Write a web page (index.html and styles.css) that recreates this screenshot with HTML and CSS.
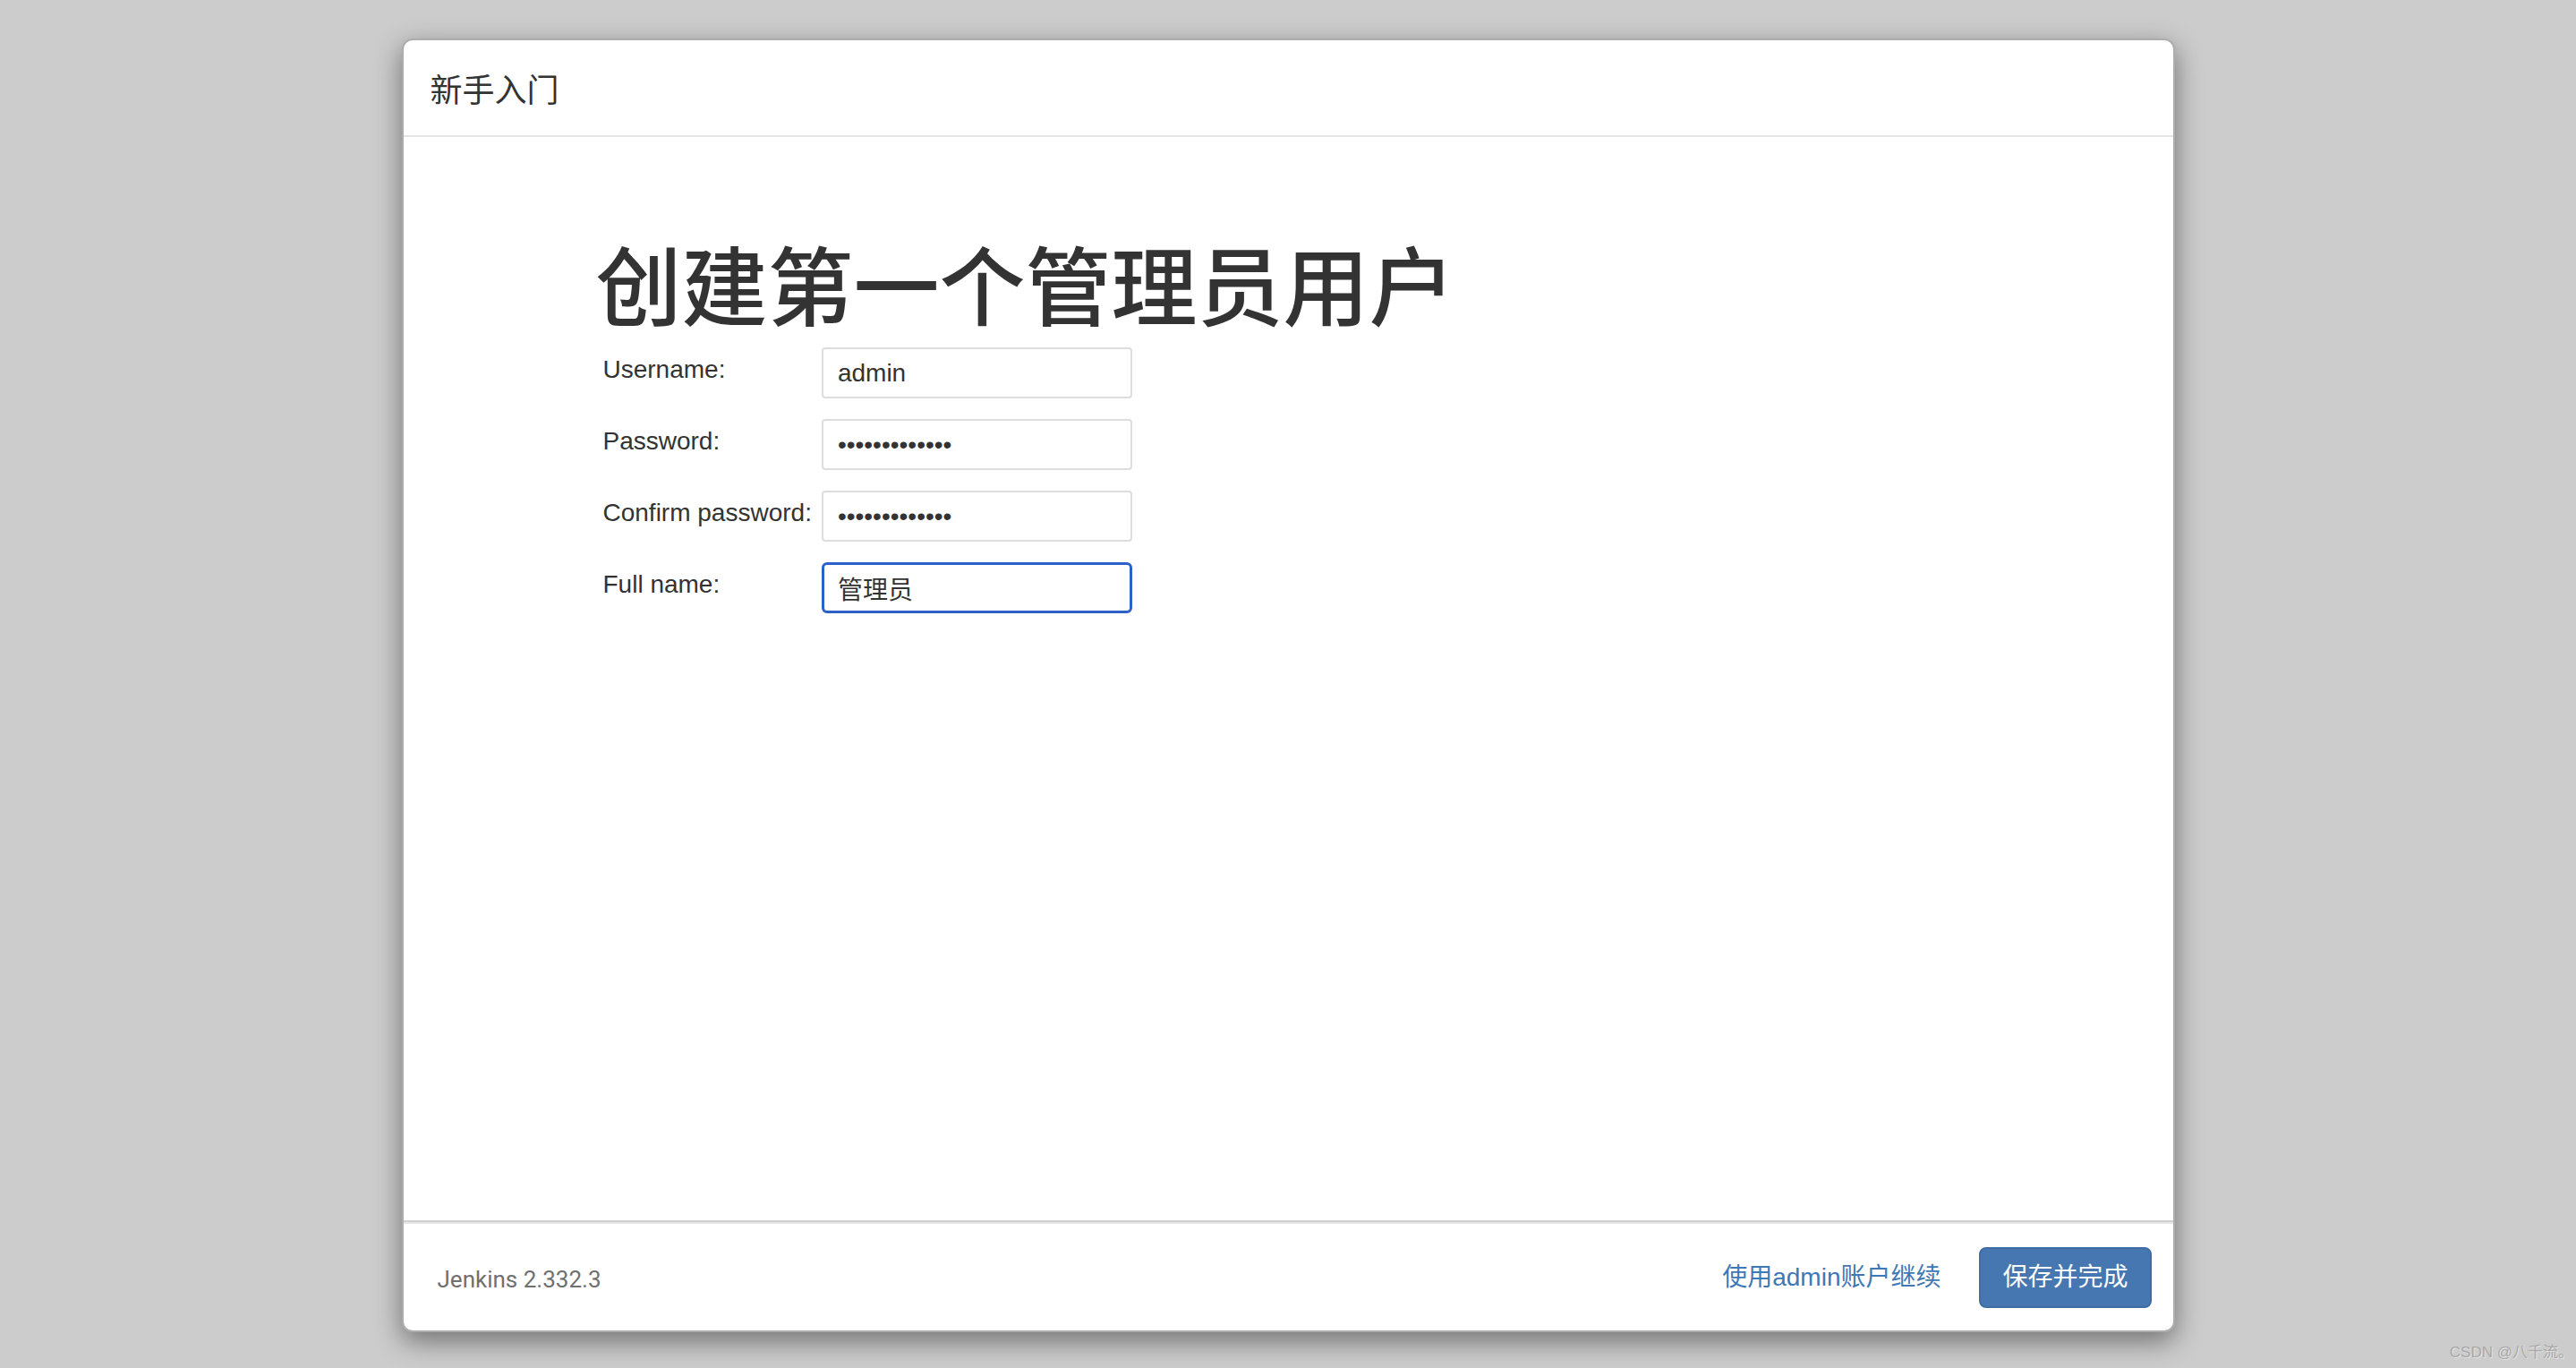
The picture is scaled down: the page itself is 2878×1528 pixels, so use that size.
FILE: index.html
```html
<!DOCTYPE html>
<html lang="zh-CN">
<head>
<meta charset="utf-8">
<title>新手入门</title>
<link rel="stylesheet" href="styles.css">
</head>
<body>
<div class="backdrop">
  <div class="modal">
    <div class="modal-header">
      <h4 class="modal-title">新手入门</h4>
    </div>
    <div class="modal-body">
      <div class="container">
        <h1 class="page-title">创建第一个管理员用户</h1>
        <div class="form-grid">
          <label class="form-label" for="username">Username:</label>
          <input class="form-input" id="username" type="text" value="admin">
          <label class="form-label" for="password1">Password:</label>
          <input class="form-input" id="password1" type="password" value="1234567890123">
          <label class="form-label" for="password2">Confirm password:</label>
          <input class="form-input" id="password2" type="password" value="1234567890123">
          <label class="form-label" for="fullname">Full name:</label>
          <input class="form-input is-focused" id="fullname" type="text" value="管理员">
        </div>
      </div>
    </div>
    <div class="modal-footer">
      <div class="jenkins-version">Jenkins 2.332.3</div>
      <div class="footer-actions">
        <a class="btn-link" href="#">使用admin账户继续</a>
        <button class="btn-primary" type="button">保存并完成</button>
      </div>
    </div>
  </div>
  <div class="watermark">CSDN @八千流。</div>
</div>
</body>
</html>
```

FILE: styles.css
```css
html, body {
  margin: 0;
  padding: 0;
}

body {
  width: 2878px;
  height: 1528px;
  overflow: hidden;
  background: #cccccc;
  font-family: "Liberation Sans", Arial, "Noto Sans CJK SC", sans-serif;
  color: #333333;
}

.backdrop {
  position: relative;
  width: 2878px;
  height: 1528px;
  padding-top: 43px;
  box-sizing: border-box;
}

.modal {
  width: 1981px;
  height: 1445px;
  margin: 0 auto;
  box-sizing: border-box;
  background: #ffffff;
  border: 2px solid rgba(0, 0, 0, 0.32);
  border-radius: 12px;
  box-shadow: 0 10px 30px rgba(0, 0, 0, 0.45);
  display: flex;
  flex-direction: column;
  overflow: hidden;
}

.modal-header {
  height: 106px;
  padding: 0 30px;
  display: flex;
  align-items: center;
  border-bottom: 2px solid #e5e5e5;
  flex-shrink: 0;
}

.modal-title {
  margin: 0;
  font-family: "Noto Sans CJK SC", sans-serif;
  font-size: 36px;
  font-weight: 400;
  line-height: 51px;
  color: #333333;
}

.modal-body {
  flex: 1;
  border-bottom: 2px solid #d0d0d0;
}

.container {
  padding-left: 215px;
  padding-top: 109px;
}

.page-title {
  margin: 0 0 20px 0;
  font-family: "Noto Sans CJK SC", sans-serif;
  font-size: 96px;
  font-weight: 500;
  line-height: 106px;
  color: #333333;
}

.form-grid {
  display: grid;
  grid-template-columns: max-content 347px;
  column-gap: 11px;
  row-gap: 23px;
  align-items: start;
  padding-left: 8px;
}

.form-label {
  font-size: 28px;
  line-height: 40px;
  padding-top: 5px;
  color: #333333;
}

.form-input {
  display: block;
  box-sizing: border-box;
  width: 347px;
  height: 57px;
  margin: 0;
  padding: 0 16px;
  border: 2px solid #dddddd;
  border-radius: 4px;
  background: #ffffff;
  font-family: "Liberation Sans", Arial, "Noto Sans CJK SC", sans-serif;
  font-size: 28px;
  color: #333333;
  outline: none;
}

.form-input.is-focused {
  border: 3px solid #2d60c8;
  border-radius: 6px;
  padding-left: 15px;
}

.modal-footer {
  height: 121px;
  flex-shrink: 0;
  border-top: 2px solid #e5e5e5;
  box-sizing: border-box;
  padding: 0 24px 0 38px;
  display: flex;
  align-items: center;
  justify-content: space-between;
}

.jenkins-version {
  font-family: "Roboto", "Liberation Sans", sans-serif;
  font-size: 26px;
  color: #707070;
  padding-top: 4px;
}

.footer-actions {
  display: flex;
  align-items: center;
  gap: 43px;
}

.btn-link {
  font-family: "Liberation Sans", Arial, "Noto Sans CJK SC", sans-serif;
  font-size: 28px;
  line-height: 40px;
  color: #3f78b6;
  text-decoration: none;
}

.btn-primary {
  box-sizing: border-box;
  height: 68px;
  padding: 12px 24px;
  border: 2px solid #3e6ca3;
  border-radius: 8px;
  background: #4777b1;
  color: #ffffff;
  font-family: "Liberation Sans", Arial, "Noto Sans CJK SC", sans-serif;
  font-size: 28px;
  line-height: 40px;
  cursor: pointer;
}

.watermark {
  position: absolute;
  right: 3px;
  bottom: 7px;
  font-family: "Liberation Sans", "Noto Sans CJK SC", sans-serif;
  font-size: 17px;
  color: #a8a8a8;
  text-shadow: 1px 1px 0 #e4e4e4;
}
```
